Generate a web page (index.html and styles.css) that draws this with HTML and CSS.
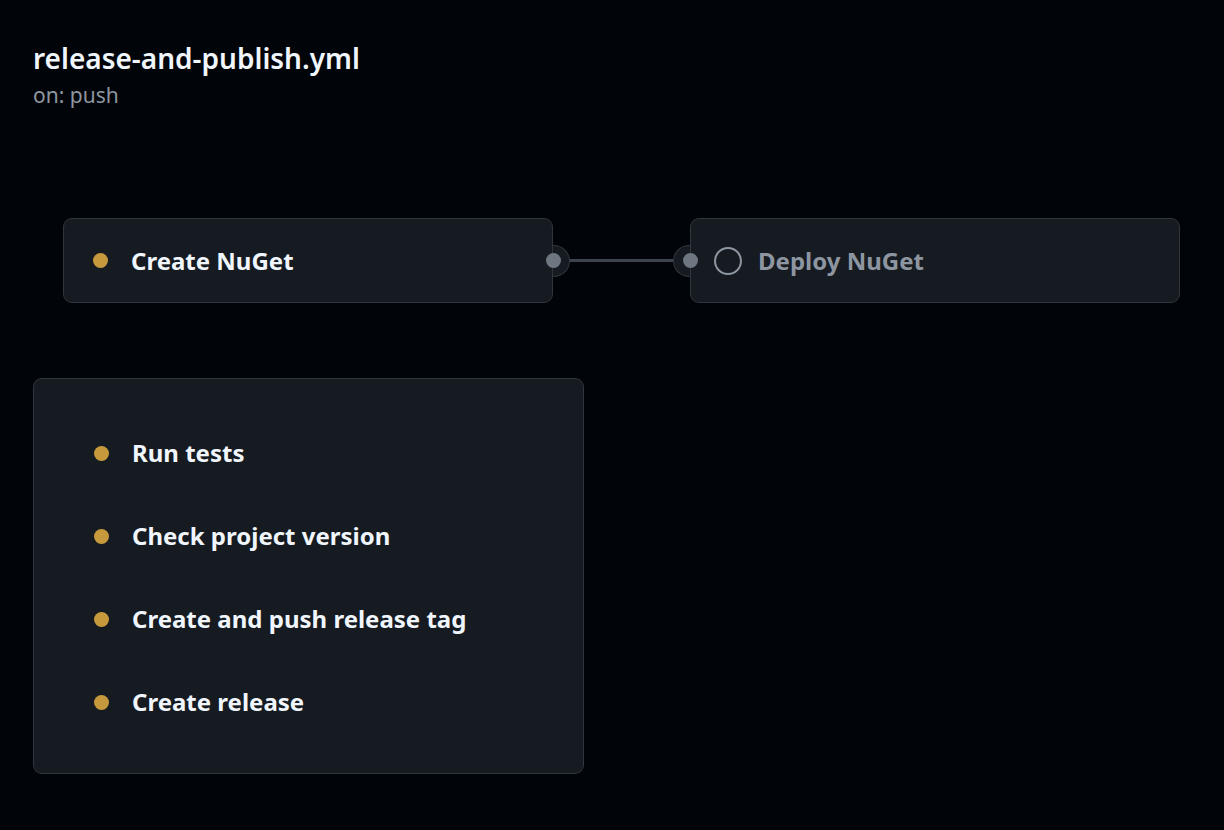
FILE: index.html
```html
<!DOCTYPE html>
<html>
<head>
<meta charset="utf-8">
<link rel="stylesheet" href="styles.css">
</head>
<body>
<div class="page">
  <header class="header">
    <h1 class="title">release-and-publish.yml</h1>
    <div class="trigger">on: push</div>
  </header>
  <div class="graph">
    <div class="row">
      <div class="job job-small has-out">
        <span class="dot"></span>
        <span class="job-name">Create NuGet</span>
      </div>
      <div class="connector"></div>
      <div class="job job-small has-in">
        <span class="ring"></span>
        <span class="job-name muted">Deploy NuGet</span>
      </div>
    </div>
    <div class="job job-big">
      <div class="step"><span class="dot"></span><span class="job-name">Run tests</span></div>
      <div class="step"><span class="dot"></span><span class="job-name">Check project version</span></div>
      <div class="step"><span class="dot"></span><span class="job-name">Create and push release tag</span></div>
      <div class="step"><span class="dot"></span><span class="job-name">Create release</span></div>
    </div>
  </div>
</div>
</body>
</html>
```
FILE: styles.css
```css
html, body {
  margin: 0;
  padding: 0;
  background: #010409;
}
body {
  font-family: "Noto Sans", "Open Sans", sans-serif;
  color: #f0f6fc;
}
.page {
  padding: 41px 33px 0 33px;
}
.title {
  margin: 0;
  font-size: 28px;
  font-weight: 600;
  line-height: 34px;
  color: #f0f6fc;
}
.trigger {
  font-size: 21px;
  line-height: 28px;
  color: #8d96a0;
  margin-top: 6px;
}
.graph {
  margin-top: 109px;
}
.row {
  display: flex;
  align-items: center;
  margin-left: 30px;
}
.job {
  background: #161b22;
  border: 1px solid #30363d;
  border-radius: 9px;
  box-sizing: border-box;
}
.job-small {
  position: relative;
  width: 490px;
  height: 85px;
  display: flex;
  align-items: center;
  padding-left: 29px;
}
.connector {
  width: 137px;
  height: 3px;
  background: #3d444d;
}
.has-out::after,
.has-in::before {
  content: "";
  position: absolute;
  top: 50%;
  width: 16px;
  height: 30px;
  margin-top: -16px;
  background: #161b22;
  border: 1px solid #30363d;
}
.has-out::after {
  right: -18px;
  border-left: none;
  border-radius: 0 16px 16px 0;
}
.has-in::before {
  left: -18px;
  border-right: none;
  border-radius: 16px 0 0 16px;
}
.has-out::before,
.has-in::after {
  content: "";
  position: absolute;
  top: 50%;
  width: 15px;
  height: 15px;
  margin-top: -7.5px;
  border-radius: 50%;
  background: #6e7681;
  z-index: 2;
}
.has-out::before { right: -8.5px; }
.has-in::after { left: -8.5px; }
.dot {
  width: 15px;
  height: 15px;
  border-radius: 50%;
  background: #c69a3c;
  flex: none;
  margin-right: 23px;
}
.ring {
  width: 24px;
  height: 24px;
  border-radius: 50%;
  border: 2.5px solid #8d96a0;
  flex: none;
  margin-left: -6px;
  margin-right: 16px;
}
.job-name {
  font-size: 24px;
  font-weight: 700;
  line-height: 32px;
  color: #f0f6fc;
}
.job-name.muted {
  color: #8d96a0;
}
.job-big {
  margin-top: 75px;
  width: 551px;
  height: 396px;
  padding: 58px 0 0 60px;
  display: flex;
  flex-direction: column;
  gap: 51px;
}
.step {
  display: flex;
  align-items: center;
  height: 32px;
}
```
